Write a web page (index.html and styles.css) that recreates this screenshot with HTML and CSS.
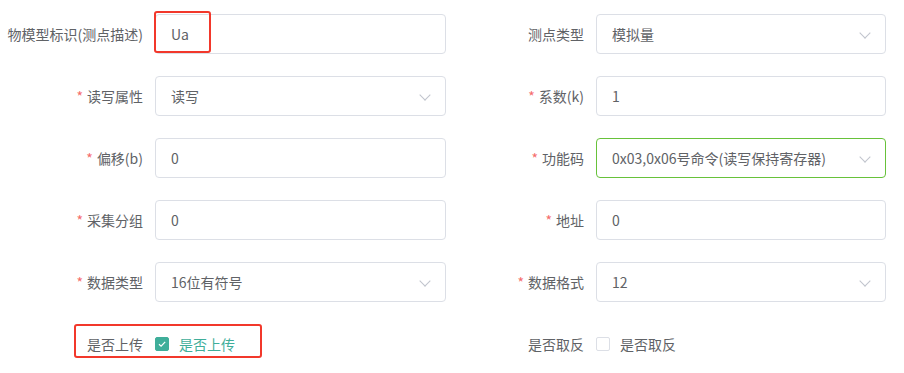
FILE: index.html
```html
<!DOCTYPE html>
<html lang="zh-CN">
  <head>
    <meta charset="UTF-8" />
    <title>测点编辑</title>
    <link rel="stylesheet" href="styles.css">
  </head>
  <body>
    <form class="point-form">
      <div class="form-item">
        <label class="item-label">物模型标识(测点描述)</label>
        <div class="control">
          <div class="input">Ua</div>
          <span class="mark mark-input"></span>
        </div>
      </div>
      <div class="form-item right">
        <label class="item-label">测点类型</label>
        <div class="control">
          <div class="input select">模拟量<span class="arrow"></span></div>
        </div>
      </div>

      <div class="form-item">
        <label class="item-label required">读写属性</label>
        <div class="control">
          <div class="input select">读写<span class="arrow"></span></div>
        </div>
      </div>
      <div class="form-item right">
        <label class="item-label required">系数(k)</label>
        <div class="control"><div class="input">1</div></div>
      </div>

      <div class="form-item">
        <label class="item-label required">偏移(b)</label>
        <div class="control"><div class="input">0</div></div>
      </div>
      <div class="form-item right">
        <label class="item-label required">功能码</label>
        <div class="control">
          <div class="input select is-valid">0x03,0x06号命令(读写保持寄存器)<span class="arrow"></span></div>
        </div>
      </div>

      <div class="form-item">
        <label class="item-label required">采集分组</label>
        <div class="control"><div class="input">0</div></div>
      </div>
      <div class="form-item right">
        <label class="item-label required">地址</label>
        <div class="control"><div class="input">0</div></div>
      </div>

      <div class="form-item">
        <label class="item-label required">数据类型</label>
        <div class="control">
          <div class="input select">16位有符号<span class="arrow"></span></div>
        </div>
      </div>
      <div class="form-item right">
        <label class="item-label required">数据格式</label>
        <div class="control">
          <div class="input select">12<span class="arrow"></span></div>
        </div>
      </div>

      <div class="form-item">
        <label class="item-label">是否上传</label>
        <div class="control">
          <span class="checkbox checked">
            <span class="box">
              <svg viewBox="0 0 14 14" width="14" height="14"><path d="M4 7.2 L6.1 9.2 L10.2 4.8" fill="none" stroke="#fff" stroke-width="1.2"/></svg>
            </span>
            是否上传
          </span>
        </div>
        <span class="mark mark-check"></span>
      </div>
      <div class="form-item right">
        <label class="item-label">是否取反</label>
        <div class="control">
          <span class="checkbox"><span class="box"></span>是否取反</span>
        </div>
      </div>
    </form>
  </body>
</html>
```

FILE: styles.css
```css
body {
  margin: 0;
  background-color: #ffffff;
  font-family: "Noto Sans CJK SC", "Noto Sans", sans-serif;
  font-size: 14px;
  color: #606266;
}

/* 两列表单 */
.point-form {
  display: grid;
  grid-template-columns: 446px 440px;
  row-gap: 22px;
  padding-top: 14px;
}

.form-item {
  display: flex;
  align-items: center;
  height: 40px;
  position: relative;
}

.item-label {
  width: 155px;
  flex-shrink: 0;
  box-sizing: border-box;
  padding-right: 12px;
  text-align: right;
  white-space: nowrap;
  line-height: 40px;
}

.form-item.right .item-label {
  width: 150px;
}

.item-label.required::before {
  content: "*";
  color: #f56c6c;
  margin-right: 4px;
}

.control {
  position: relative;
  flex: 1;
  display: flex;
  align-items: center;
  height: 40px;
}

.input {
  width: 100%;
  height: 40px;
  box-sizing: border-box;
  border: 1px solid #dcdfe6;
  border-radius: 4px;
  padding: 0 15px;
  line-height: 38px;
  position: relative;
}

.select {
  padding-right: 30px;
}

.is-valid {
  border-color: #67c23a;
}

/* 下拉箭头 */
.arrow {
  position: absolute;
  right: 16px;
  top: 14px;
  width: 7px;
  height: 7px;
  border-right: 1px solid #c0c4cc;
  border-bottom: 1px solid #c0c4cc;
  transform: rotate(45deg);
}

/* 复选框 */
.checkbox {
  display: flex;
  align-items: center;
  gap: 10px;
  color: #606266;
}

.checkbox .box {
  width: 14px;
  height: 14px;
  box-sizing: border-box;
  border: 1px solid #dcdfe6;
  border-radius: 2px;
  display: flex;
}

.checkbox.checked {
  color: #3fae9a;
}

.checkbox.checked .box {
  background-color: #3fae9a;
  border-color: #3fae9a;
}

.checkbox.checked .box svg {
  margin: -1px;
}

/* 红色标注框 */
.mark {
  position: absolute;
  border: 2px solid #f2382b;
  border-radius: 3px;
  pointer-events: none;
}

.mark-input {
  left: -1px;
  top: -3px;
  width: 53px;
  height: 38px;
}

.mark-check {
  left: 74px;
  top: 0;
  width: 184px;
  height: 30px;
}
```
